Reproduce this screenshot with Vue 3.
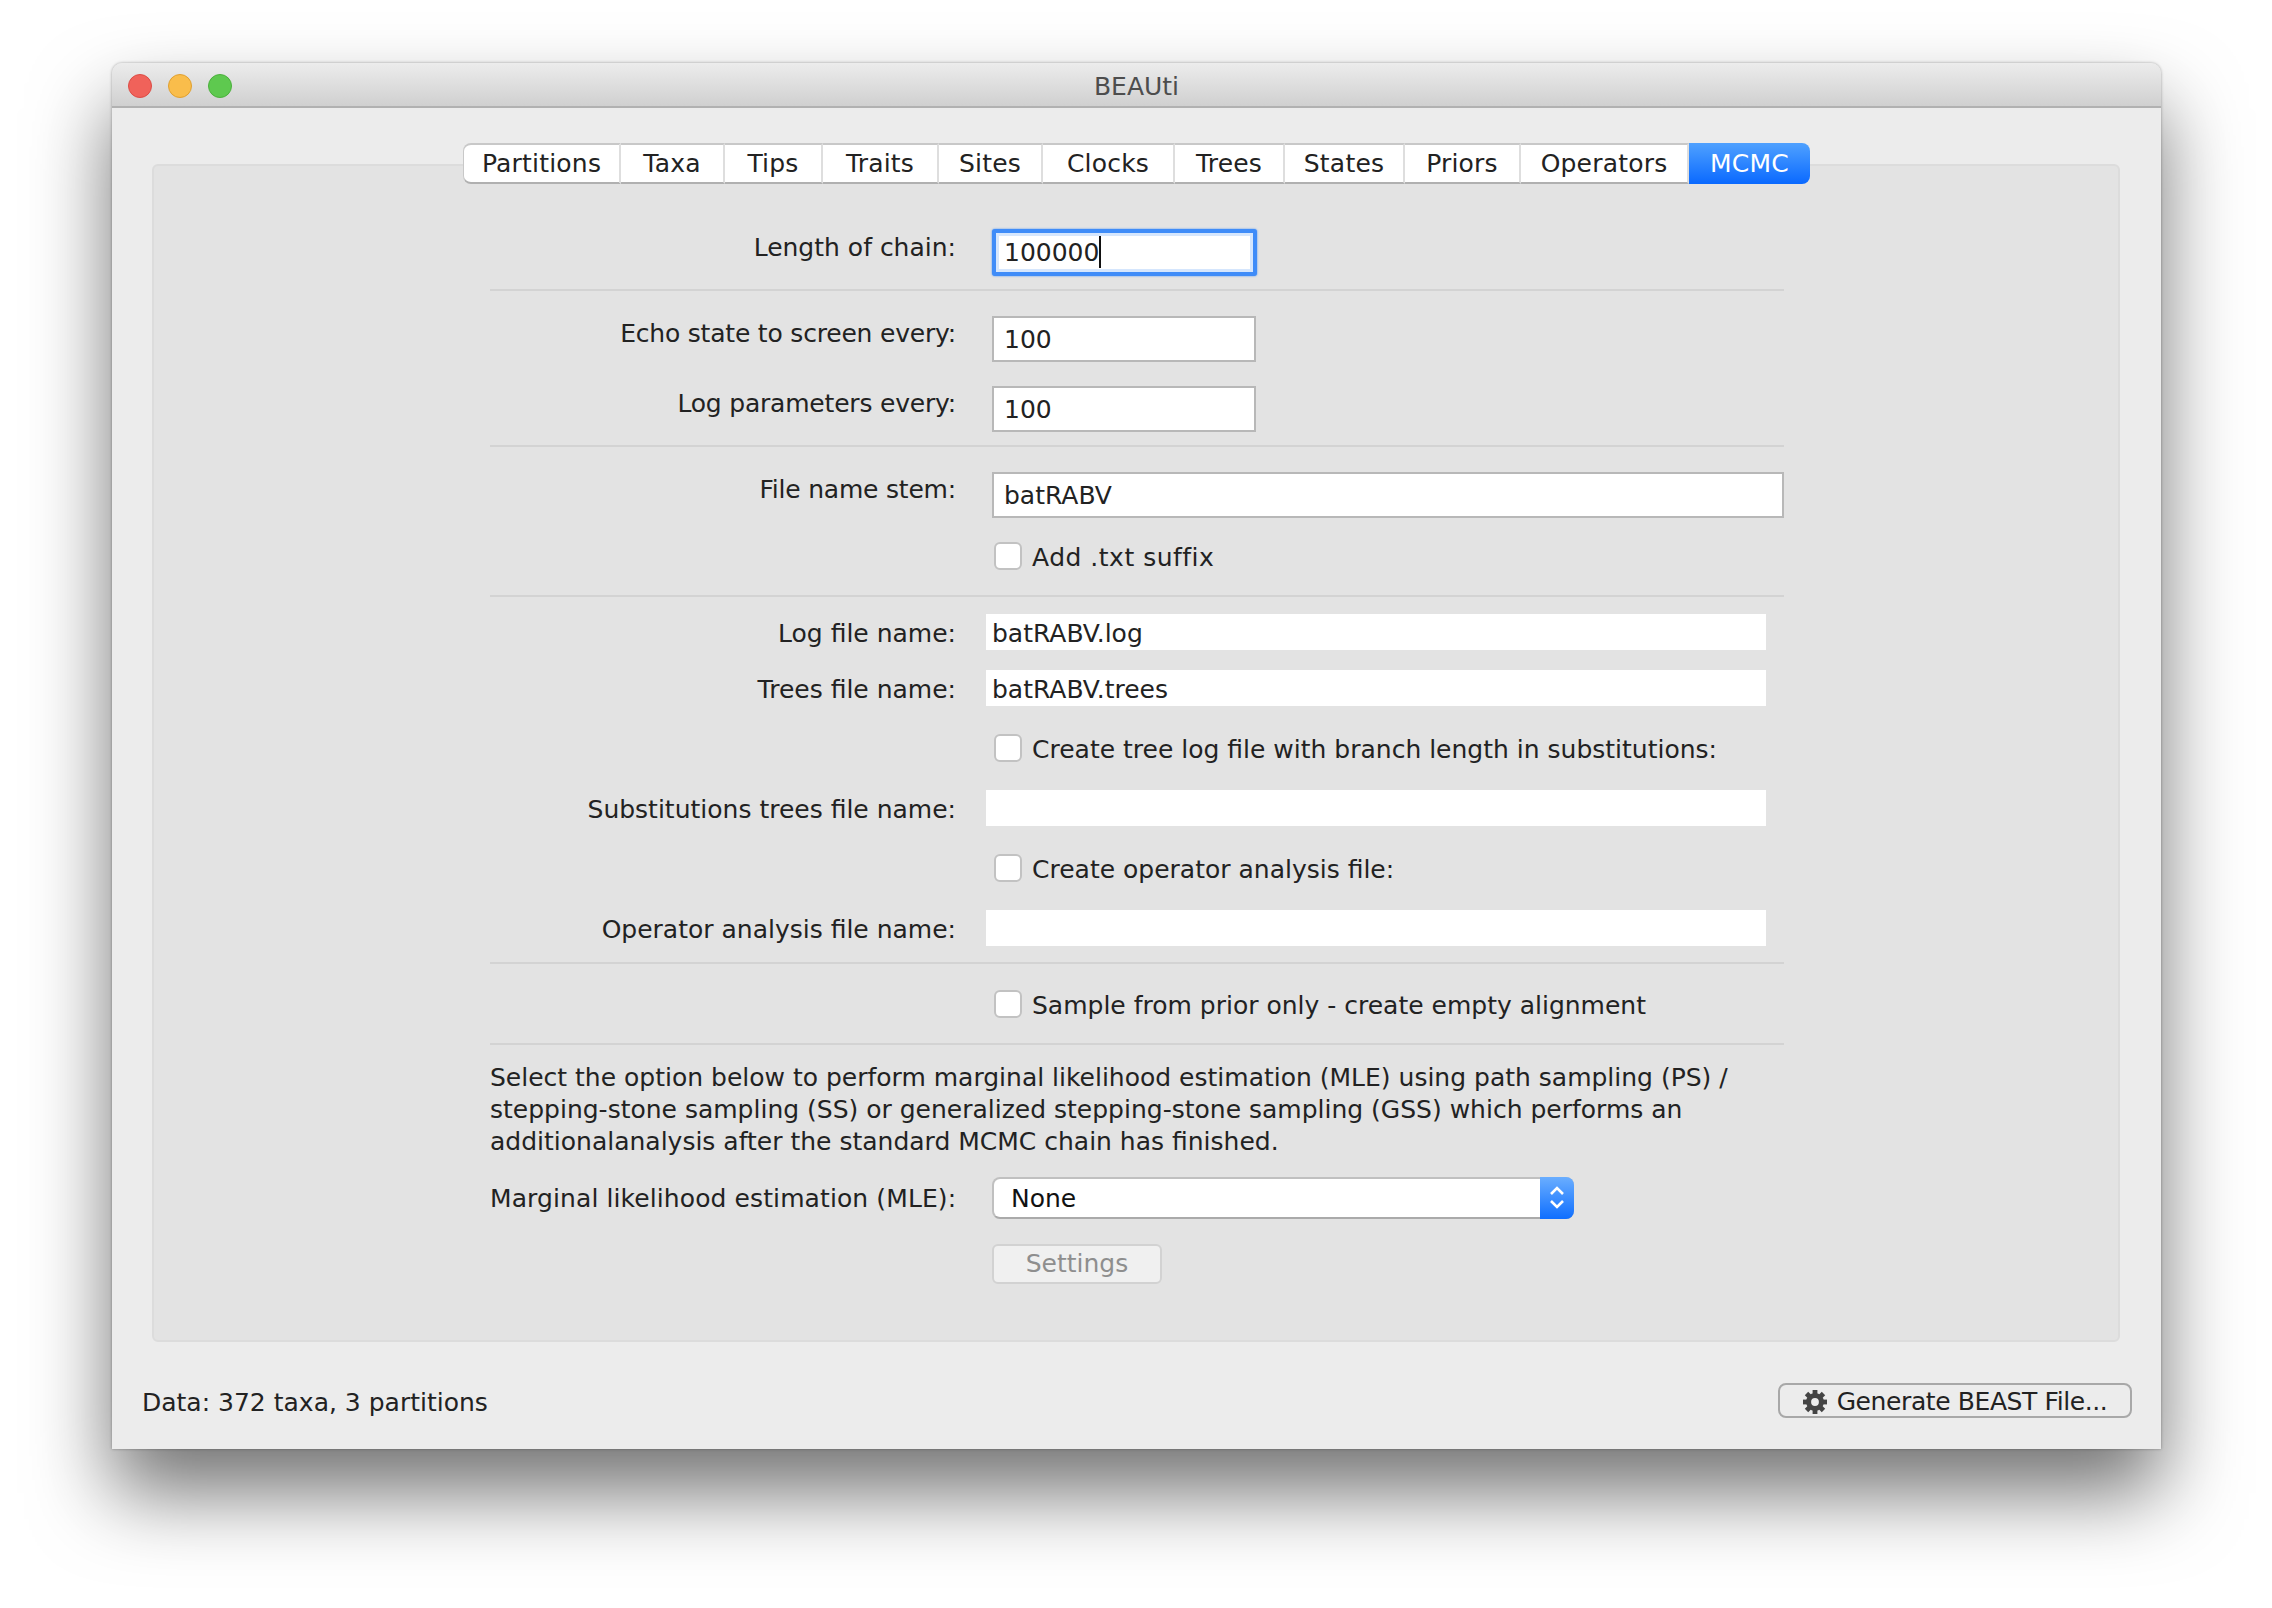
<template>
  <div class="page">
    <div class="window">
      <div class="titlebar">
        <span class="light red"></span>
        <span class="light yellow"></span>
        <span class="light green"></span>
        <span class="title">BEAUti</span>
      </div>

      <div class="body">
        <div class="tabs">
          <div v-for="tab in tabs" :key="tab" class="tab" :class="{ active: tab === 'MCMC' }">{{ tab }}</div>
        </div>

        <div class="panel">
          <div class="form">
            <div class="row first">
              <label class="up">Length of chain:</label>
              <div class="field short focused">100000<span class="caret"></span></div>
            </div>
            <div class="sep s1"></div>

            <div class="row">
              <label class="up">Echo state to screen every:</label>
              <div class="field short">100</div>
            </div>
            <div class="row gap24">
              <label class="up">Log parameters every:</label>
              <div class="field short">100</div>
            </div>
            <div class="sep s2"></div>

            <div class="row">
              <label class="up">File name stem:</label>
              <div class="field">batRABV</div>
            </div>
            <div class="row gap24">
              <span></span>
              <div class="check wide"><i></i><span>Add .txt suffix</span></div>
            </div>
            <div class="sep s3"></div>

            <div class="row">
              <label class="low">Log file name:</label>
              <div class="plain">batRABV.log</div>
            </div>
            <div class="row gap20">
              <label class="low">Trees file name:</label>
              <div class="plain">batRABV.trees</div>
            </div>
            <div class="row gap28">
              <span></span>
              <div class="check"><i></i><span>Create tree log file with branch length in substitutions:</span></div>
            </div>
            <div class="row gap28">
              <label class="low">Substitutions trees file name:</label>
              <div class="plain"></div>
            </div>
            <div class="row gap28">
              <span></span>
              <div class="check"><i></i><span>Create operator analysis file:</span></div>
            </div>
            <div class="row gap28">
              <label class="low">Operator analysis file name:</label>
              <div class="plain"></div>
            </div>
            <div class="sep s4"></div>

            <div class="row">
              <span></span>
              <div class="check"><i></i><span>Sample from prior only - create empty alignment</span></div>
            </div>
            <div class="sep s5"></div>

            <p class="note">
              Select the option below to perform marginal likelihood estimation (MLE) using path sampling (PS) /<br>
              stepping-stone sampling (SS) or generalized stepping-stone sampling (GSS) which performs an<br>
              additionalanalysis after the standard MCMC chain has finished.
            </p>

            <div class="row mle">
              <label>Marginal likelihood estimation (MLE):</label>
              <div class="select">
                <span>None</span>
                <div class="arrows">
                  <svg width="16" height="28" viewBox="0 0 16 28" fill="none" stroke="#fff" stroke-width="2.6">
                    <path d="M2 10 L8 4 L14 10" />
                    <path d="M2 17 L8 23 L14 17" />
                  </svg>
                </div>
              </div>
            </div>
            <div class="row gap25">
              <span></span>
              <div class="settings">Settings</div>
            </div>
          </div>
        </div>

        <div class="footer">
          <span class="data">Data: 372 taxa, 3 partitions</span>
          <div class="generate">
            <svg width="24" height="24" viewBox="0 0 24 24">
              <rect v-for="a in gearAngles" :key="a" x="9.6" y="0" width="4.8" height="6" fill="#444" :transform="`rotate(${a} 12 12)`" />
              <circle cx="12" cy="12" r="6.4" fill="none" stroke="#444" stroke-width="5" />
            </svg>
            <span>Generate BEAST File...</span>
          </div>
        </div>
      </div>
    </div>
  </div>
</template>

<script setup>
const tabs = ['Partitions', 'Taxa', 'Tips', 'Traits', 'Sites', 'Clocks', 'Trees', 'States', 'Priors', 'Operators', 'MCMC']
const gearAngles = [0, 45, 90, 135, 180, 225, 270, 315]
</script>

<style>
html, body {
  background: #ffffff;
}
</style>

<style scoped>
.page {
  height: 1608px;
  box-sizing: border-box;
  padding: 63px 0 0 112px;
  overflow: hidden;
}

.window {
  width: 2049px;
  height: 1386px;
  background: #ececec;
  border-radius: 10px 10px 0 0;
  box-shadow: 0 44px 80px rgba(0, 0, 0, 0.55), 0 0 3px rgba(0, 0, 0, 0.35);
  font-family: "DejaVu Sans", sans-serif;
  font-size: 25px;
  color: #222222;
}

.titlebar {
  height: 45px;
  box-sizing: border-box;
  display: flex;
  align-items: center;
  gap: 16px;
  padding: 3px 0 0 16px;
  position: relative;
  background: linear-gradient(#ececec, #d0d0d0);
  border-bottom: 2px solid #b1b1b1;
  border-radius: 10px 10px 0 0;
}

.light {
  width: 24px;
  height: 24px;
  border-radius: 50%;
  box-sizing: border-box;
}
.red { background: #f0625a; border: 1px solid #dc4c45; }
.yellow { background: #f9bd4b; border: 1px solid #e0a030; }
.green { background: #5ec94f; border: 1px solid #4bb03c; }

.title {
  position: absolute;
  left: 0;
  right: 0;
  margin-top: 1px;
  text-align: center;
  color: #4d4d4d;
}

.body {
  padding: 35px 41px 0 40px;
}

.tabs {
  display: grid;
  grid-template-columns: 158px 104px 98px 116px 104px 132px 110px 120px 116px 168px 121px;
  height: 41px;
  margin-left: 311px;
  width: 1347px;
  margin-bottom: -20px;
  position: relative;
  letter-spacing: 0.2px;
}

.tab {
  background: #ffffff;
  display: flex;
  align-items: center;
  justify-content: center;
  box-sizing: border-box;
  border-top: 2px solid #c8c8c8;
  border-bottom: 2px solid #b0b0b0;
  border-right: 2px solid #dedede;
}
.tab:first-child {
  border-left: 1px solid #c8c8c8;
  border-radius: 8px 0 0 8px;
}
.tab.active {
  background: linear-gradient(#4fa1ff, #0a69ff);
  border: none;
  color: #ffffff;
  border-radius: 0 8px 8px 0;
}

.panel {
  height: 1178px;
  box-sizing: border-box;
  background: #e3e3e3;
  border: 2px solid #dcdcdc;
  border-radius: 6px;
  padding-left: 336px;
}

.form {
  width: 1294px;
  padding-top: 63px;
}

.row {
  display: grid;
  grid-template-columns: 466px 1fr;
  column-gap: 36px;
  align-items: center;
}
.row label {
  text-align: right;
  white-space: nowrap;
}
.row label.up {
  margin-top: -12px;
  letter-spacing: -0.2px;
}
.row.first label.up {
  margin-top: -10px;
  letter-spacing: 0;
}
.row label.low {
  padding-top: 2px;
}
.mle label {
  letter-spacing: 0.1px;
}

.gap20 { margin-top: 20px; }
.gap24 { margin-top: 24px; }
.gap25 { margin-top: 25px; }
.gap28 { margin-top: 28px; }

.sep {
  height: 2px;
  background: #d3d3d3;
}
.s1 { margin: 13px 0 25px; }
.s2 { margin: 13px 0 25px; }
.s3 { margin: 25px 0 17px; }
.s4 { margin: 16px 0 26px; }
.s5 { margin: 25px 0 15px; }

.field {
  height: 46px;
  box-sizing: border-box;
  background: #ffffff;
  border: 2px solid #b8b8b8;
  padding-left: 10px;
  line-height: 44px;
  white-space: nowrap;
}
.field.short {
  width: 264px;
}
.field.focused {
  width: 265px;
  height: 47px;
  border: 4px solid #3f8cf8;
  box-shadow: inset 0 0 0 3px #d5e6fd, 0 0 2px #3f8cf8;
  border-radius: 3px;
  padding-left: 8px;
  line-height: 40px;
}
.caret {
  display: inline-block;
  width: 2px;
  height: 32px;
  background: #111111;
  vertical-align: -7px;
}

.plain {
  height: 36px;
  width: 780px;
  margin-left: -6px;
  background: #ffffff;
  padding-left: 6px;
  box-sizing: border-box;
  line-height: 39px;
}

.check {
  height: 28px;
  display: flex;
  align-items: center;
  gap: 10px;
  margin-left: 2px;
  white-space: nowrap;
}
.check span {
  padding-top: 3px;
}
.check.wide {
  letter-spacing: 0.5px;
}
.check i {
  width: 28px;
  height: 28px;
  box-sizing: border-box;
  background: #ffffff;
  border: 2px solid #c2c2c2;
  border-radius: 6px;
}

.note {
  margin: 0;
  padding-top: 2px;
  margin-bottom: -1px;
  line-height: 32px;
  white-space: nowrap;
}

.mle {
  margin-top: 20px;
}

.select {
  width: 582px;
  height: 42px;
  box-sizing: border-box;
  background: #ffffff;
  border: 2px solid #c0c0c0;
  border-bottom-color: #aaaaaa;
  border-radius: 8px;
  padding-left: 17px;
  position: relative;
  display: flex;
  align-items: center;
  color: #111111;
}
.arrows {
  position: absolute;
  top: -2px;
  right: -2px;
  width: 34px;
  height: 42px;
  background: linear-gradient(#6aaeff, #0f6fff);
  border-radius: 0 8px 8px 0;
  display: flex;
  align-items: center;
  justify-content: center;
}

.settings {
  width: 170px;
  height: 40px;
  box-sizing: border-box;
  background: #f0f0f0;
  border: 2px solid #d2d2d2;
  border-radius: 6px;
  color: #8e8e8e;
  text-align: center;
  line-height: 36px;
}

.footer {
  display: flex;
  align-items: center;
  justify-content: space-between;
  margin: 41px -12px 0 -10px;
}
.data {
  padding-top: 3px;
}

.generate {
  width: 354px;
  height: 35px;
  box-sizing: border-box;
  padding-top: 2px;
  border: 2px solid #a8a8a8;
  border-radius: 8px;
  display: flex;
  align-items: center;
  justify-content: center;
  gap: 10px;
  white-space: nowrap;
  letter-spacing: -0.4px;
}
</style>
